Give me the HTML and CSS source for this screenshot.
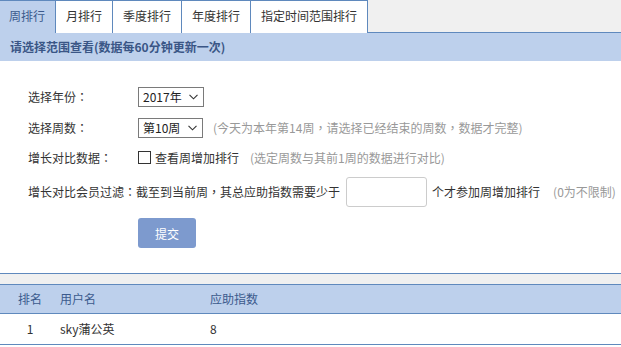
FILE: index.html
```html
<!DOCTYPE html>
<html lang="zh-CN">
<head>
<meta charset="utf-8">
<title>周排行</title>
<link rel="stylesheet" href="styles.css">
</head>
<body>
<div class="tabs">
  <a class="tab active">周排行</a>
  <a class="tab">月排行</a>
  <a class="tab">季度排行</a>
  <a class="tab">年度排行</a>
  <a class="tab">指定时间范围排行</a>
</div>
<div class="panel-head">请选择范围查看(数据每60分钟更新一次)</div>
<form class="form">
  <div class="row row-year">
    <span class="label">选择年份<span class="p" lang="zh-TW">：</span></span>
    <span class="sel sel-year">
      <select><option>2017年</option></select>
      <svg class="chev" width="9" height="6" viewBox="0 0 9 6"><path d="M0.5 0.8 L4.5 4.8 L8.5 0.8" fill="none" stroke="#333" stroke-width="1.1"/></svg>
    </span>
  </div>
  <div class="row row-week">
    <span class="label">选择周数<span class="p" lang="zh-TW">：</span></span>
    <span class="sel sel-week">
      <select><option>第10周</option></select>
      <svg class="chev" width="9" height="6" viewBox="0 0 9 6"><path d="M0.5 0.8 L4.5 4.8 L8.5 0.8" fill="none" stroke="#333" stroke-width="1.1"/></svg>
    </span>
    <span class="hint">(今天为本年第14周<span class="p" lang="zh-TW">，</span>请选择已经结束的周数<span class="p" lang="zh-TW">，</span>数据才完整)</span>
  </div>
  <div class="row row-cmp">
    <span class="label">增长对比数据<span class="p" lang="zh-TW">：</span></span>
    <label class="check"><input type="checkbox"><span>查看周增加排行</span></label>
    <span class="hint hint-cmp">(选定周数与其前1周的数据进行对比)</span>
  </div>
  <div class="row row-filter">
    <span class="label-long">增长对比会员过滤<span class="p" lang="zh-TW">：</span>截至到当前周<span class="p" lang="zh-TW">，</span>其总应助指数需要少于</span>
    <input class="num" type="text">
    <span class="after">个才参加周增加排行</span>
    <span class="hint hint-zero">(0为不限制)</span>
  </div>
  <div class="row row-btn">
    <button type="button" class="submit">提交</button>
  </div>
</form>
<div class="table">
  <div class="gap-band"></div>
  <div class="tr th">
    <span class="c1">排名</span><span class="c2">用户名</span><span class="c3">应助指数</span>
  </div>
  <div class="tr td">
    <span class="c1">1</span><span class="c2">sky蒲公英</span><span class="c3">8</span>
  </div>
</div>
</body>
</html>
```
FILE: styles.css
```css
* { box-sizing: border-box; }
html, body { margin: 0; padding: 0; background: #fff; }
body {
  font-family: "Noto Sans CJK SC", "Microsoft YaHei", "Liberation Sans", sans-serif;
  font-size: 12px;
  color: #333;
  line-height: 1.2;
}
.p {
  font-family: "Noto Sans CJK TC", "Noto Sans CJK SC", sans-serif;
}
.tabs {
  display: flex;
  background: #f0f0f0;
  border-bottom: 1px solid #5f89bd;
  height: 33px;
}
.tab {
  display: flex;
  align-items: center;
  height: 33px;
  padding: 0 10px 1px 10px;
  background: #fff;
  border: 1px solid #5f89bd;
  border-bottom: none;
  margin-right: -1px;
  margin-bottom: -1px;
  color: #333;
  font-size: 12px;
}
.tab.active {
  background: #bdd0ec;
  color: #3b5a8c;
  border-left: none;
  padding-left: 9px;
}
.tab:last-child { margin-right: 0; }
.panel-head {
  height: 28px;
  background: #bdd0ec;
  padding: 0 10px;
  display: flex;
  align-items: center;
  font-weight: bold;
  color: #3a5686;
  font-size: 12px;
}
.form {
  padding: 26px 0 0 28px;
}
.row {
  display: flex;
  align-items: center;
}
.label {
  width: 110px;
  flex: none;
}
.row-year { height: 20px; }
.row-week { height: 20px; margin-top: 11px; }
.row-cmp { height: 20px; margin-top: 10px; }
.row-filter { height: 30px; margin-top: 9px; }
.row-btn { margin-top: 11px; padding-left: 110px; height: 30px; }
.sel {
  position: relative;
  display: inline-block;
  height: 20px;
}
.sel select {
  appearance: none;
  -webkit-appearance: none;
  height: 20px;
  border: 1px solid #7a7a7a;
  border-radius: 0;
  background: #fff;
  font-family: inherit;
  font-size: 12px;
  color: #222;
  padding: 0 0 0 4px;
  margin: 0;
  line-height: 18px;
}
.sel-year select { width: 66px; }
.sel-week select { width: 65px; }
.chev {
  position: absolute;
  right: 6px;
  top: 7px;
  pointer-events: none;
}
.hint {
  color: #999;
  margin-left: 10px;
}
.check {
  display: flex;
  align-items: center;
}
.check input {
  appearance: none;
  -webkit-appearance: none;
  width: 13px;
  height: 13px;
  margin: 0 4px 0 0;
  border: 1px solid #333;
  border-radius: 0;
  background: #fff;
}
.hint-cmp { margin-left: 11px; }
.label-long { flex: none; }
.num {
  width: 81px;
  height: 30px;
  margin: 0 5px 0 6px;
  border: 1px solid #ccc;
  border-radius: 3px;
  padding: 0 6px;
  font-family: inherit;
  font-size: 12px;
}
.hint-zero { margin-left: 13px; }
.submit {
  width: 58px;
  height: 30px;
  border: none;
  border-radius: 3px;
  background: #7d9ace;
  color: #fff;
  font-family: inherit;
  font-size: 12px;
  padding: 0;
}
.table {
  margin-top: 25px;
}
.gap-band {
  height: 12px;
  background: #f0f0f0;
  border-top: 1px solid #5f89bd;
  border-bottom: 1px solid #5f89bd;
}
.tr {
  display: grid;
  grid-template-columns: 60px 150px 1fr;
  align-items: center;
  border-bottom: 1px solid #5f89bd;
}
.th {
  height: 29px;
  background: #bdd0ec;
  color: #3b5a8c;
}
.td {
  height: 31px;
  color: #333;
}
.c1 { text-align: center; }
```
